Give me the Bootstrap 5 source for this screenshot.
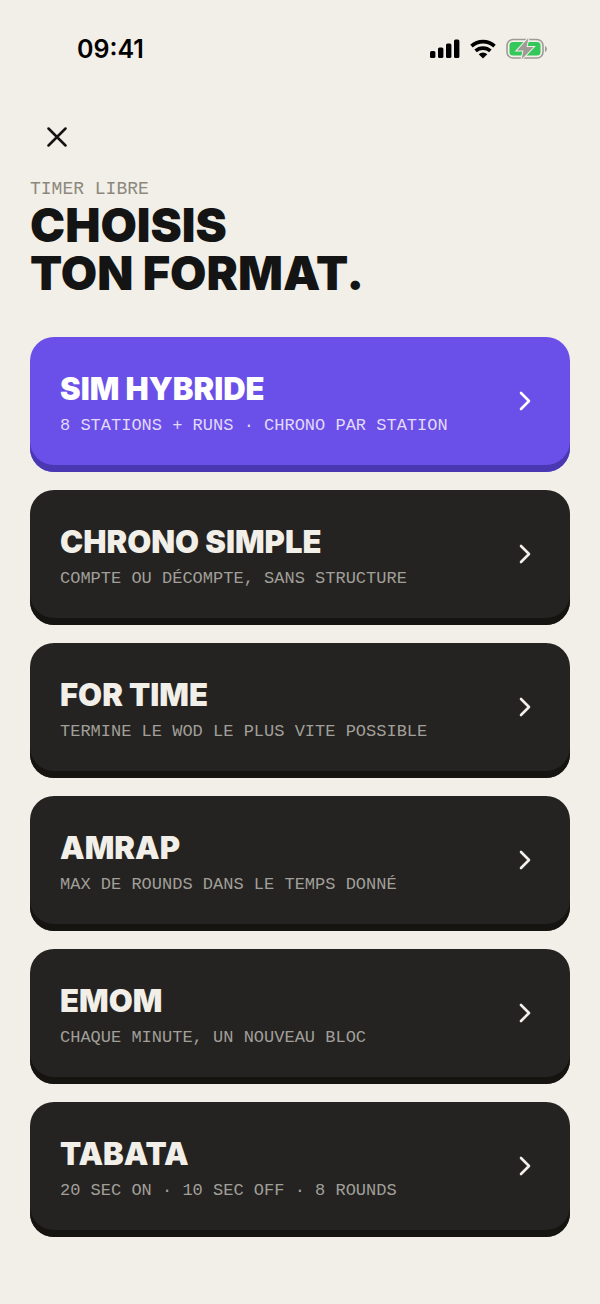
<!DOCTYPE html>
<html lang="fr">
<head>
<meta charset="utf-8">
<meta name="viewport" content="width=device-width, initial-scale=1">
<title>Timer libre</title>
<link href="https://cdn.jsdelivr.net/npm/bootstrap@5.3.0/dist/css/bootstrap.min.css" rel="stylesheet">
<style>
  body { background: #f1efe8; color: #141414; font-family: Inter, "Liberation Sans", sans-serif; }
  .status-bar { height: 98px; padding: 0 52px 0 77px; color: #000; }
  .clock { font-size: 25px; font-weight: 600; line-height: 32px; }
  .screen { padding: 12px 30px 66px; }
  .close-btn { width: 54px; height: 54px; color: #141414; }
  .eyebrow, .format-note { font-family: "Liberation Mono", monospace; }
  .eyebrow { font-size: 18px; line-height: 24px; margin: 13px 0 0; color: #8c887d; }
  .headline { font-size: 47px; line-height: 48px; font-weight: 900; margin: 0 0 40px; }
  .format-list { gap: 18px; }
  .format-card { height: 135px; padding: 0 30px 7px; border-radius: 24px; background: #242321; color: #f1efe8; box-shadow: inset 0 -7px 0 #151411; }
  .format-card:hover { color: #f1efe8; }
  .format-card.featured { background: #6a4fe8; color: #fff; box-shadow: inset 0 -7px 0 #4a38b3; }
  .format-text { padding-top: 6px; }
  .format-name { font-size: 31px; line-height: 36px; font-weight: 900; }
  .format-note { font-size: 17px; line-height: 24px; margin-top: 7px; color: #a19f99; }
  .featured .format-note { color: #e1dafa; }
</style>
</head>
<body>
<header class="status-bar d-flex align-items-center justify-content-between">
  <time class="clock">09:41</time>
  <div class="d-flex align-items-center">
    <svg width="30" height="20" viewBox="0 0 30 20" role="img" aria-label="Réseau">
      <rect x="0" y="12" width="5.4" height="7" rx="1.5"/><rect x="8" y="8.5" width="5.4" height="10.5" rx="1.5"/><rect x="16" y="4.5" width="5.4" height="14.5" rx="1.5"/><rect x="24" y="0.500" width="5.4" height="18.500" rx="1.5"/>
    </svg>
    <svg class="ms-2 me-2" width="30" height="20" viewBox="0 0 30 20" role="img" aria-label="Wi-Fi">
      <path d="M3.500 7.200a17 17 0 0 1 23 0M7.600 11.900a11 11 0 0 1 14.800 0" fill="none" stroke="#000" stroke-width="3.700"/>
      <path d="M10.700 15.300a6.300 6.300 0 0 1 8.600 0L15 19.500z"/>
    </svg>
    <svg width="42" height="22" viewBox="0 0 42 22" role="img" aria-label="Batterie en charge">
      <rect x="1" y="1.500" width="36" height="18.500" rx="6" fill="none" stroke="#9d9b96" stroke-width="1.600"/>
      <rect x="3.500" y="4" width="31" height="13.500" rx="3.500" fill="#34c759"/>
      <path d="M39 8v6c2.500-1 2.500-5 0-6z" fill="#9d9b96"/>
      <path d="M22.500 0 11 12.500h6.500L15.500 21.500 27.500 9h-7z" fill="#9d9b96" stroke="#f1efe8" stroke-width="2" paint-order="stroke"/>
    </svg>
  </div>
</header>

<main class="screen">
  <button type="button" class="close-btn btn border-0 p-0 d-flex align-items-center justify-content-center" aria-label="Fermer">
    <svg width="20" height="20" viewBox="0 0 20 20" fill="none" stroke="currentColor" stroke-width="2.500" stroke-linecap="round"><path d="M1.500 1.500l17 17M18.500 1.500l-17 17"/></svg>
  </button>
  <p class="eyebrow">TIMER LIBRE</p>
  <h1 class="headline">CHOISIS<br>TON FORMAT.</h1>

  <nav class="format-list d-flex flex-column" aria-label="Formats">
    <a href="#sim" class="format-card featured d-flex align-items-center justify-content-between text-decoration-none">
      <span class="format-text d-flex flex-column"><span class="format-name">SIM HYBRIDE</span><span class="format-note">8 STATIONS + RUNS · CHRONO PAR STATION</span></span>
      <svg class="me-2" width="14" height="20" viewBox="0 0 14 20" fill="none" stroke="currentColor" stroke-width="2.600" stroke-linecap="round" stroke-linejoin="round"><path d="M3 2l8 8-8 8"/></svg>
    </a>
    <a href="#chrono" class="format-card d-flex align-items-center justify-content-between text-decoration-none">
      <span class="format-text d-flex flex-column"><span class="format-name">CHRONO SIMPLE</span><span class="format-note">COMPTE OU DÉCOMPTE, SANS STRUCTURE</span></span>
      <svg class="me-2" width="14" height="20" viewBox="0 0 14 20" fill="none" stroke="currentColor" stroke-width="2.600" stroke-linecap="round" stroke-linejoin="round"><path d="M3 2l8 8-8 8"/></svg>
    </a>
    <a href="#fortime" class="format-card d-flex align-items-center justify-content-between text-decoration-none">
      <span class="format-text d-flex flex-column"><span class="format-name">FOR TIME</span><span class="format-note">TERMINE LE WOD LE PLUS VITE POSSIBLE</span></span>
      <svg class="me-2" width="14" height="20" viewBox="0 0 14 20" fill="none" stroke="currentColor" stroke-width="2.600" stroke-linecap="round" stroke-linejoin="round"><path d="M3 2l8 8-8 8"/></svg>
    </a>
    <a href="#amrap" class="format-card d-flex align-items-center justify-content-between text-decoration-none">
      <span class="format-text d-flex flex-column"><span class="format-name">AMRAP</span><span class="format-note">MAX DE ROUNDS DANS LE TEMPS DONNÉ</span></span>
      <svg class="me-2" width="14" height="20" viewBox="0 0 14 20" fill="none" stroke="currentColor" stroke-width="2.600" stroke-linecap="round" stroke-linejoin="round"><path d="M3 2l8 8-8 8"/></svg>
    </a>
    <a href="#emom" class="format-card d-flex align-items-center justify-content-between text-decoration-none">
      <span class="format-text d-flex flex-column"><span class="format-name">EMOM</span><span class="format-note">CHAQUE MINUTE, UN NOUVEAU BLOC</span></span>
      <svg class="me-2" width="14" height="20" viewBox="0 0 14 20" fill="none" stroke="currentColor" stroke-width="2.600" stroke-linecap="round" stroke-linejoin="round"><path d="M3 2l8 8-8 8"/></svg>
    </a>
    <a href="#tabata" class="format-card d-flex align-items-center justify-content-between text-decoration-none">
      <span class="format-text d-flex flex-column"><span class="format-name">TABATA</span><span class="format-note">20 SEC ON · 10 SEC OFF · 8 ROUNDS</span></span>
      <svg class="me-2" width="14" height="20" viewBox="0 0 14 20" fill="none" stroke="currentColor" stroke-width="2.600" stroke-linecap="round" stroke-linejoin="round"><path d="M3 2l8 8-8 8"/></svg>
    </a>
  </nav>
</main>
<script src="https://cdn.jsdelivr.net/npm/bootstrap@5.3.0/dist/js/bootstrap.bundle.min.js"></script>
</body>
</html>
